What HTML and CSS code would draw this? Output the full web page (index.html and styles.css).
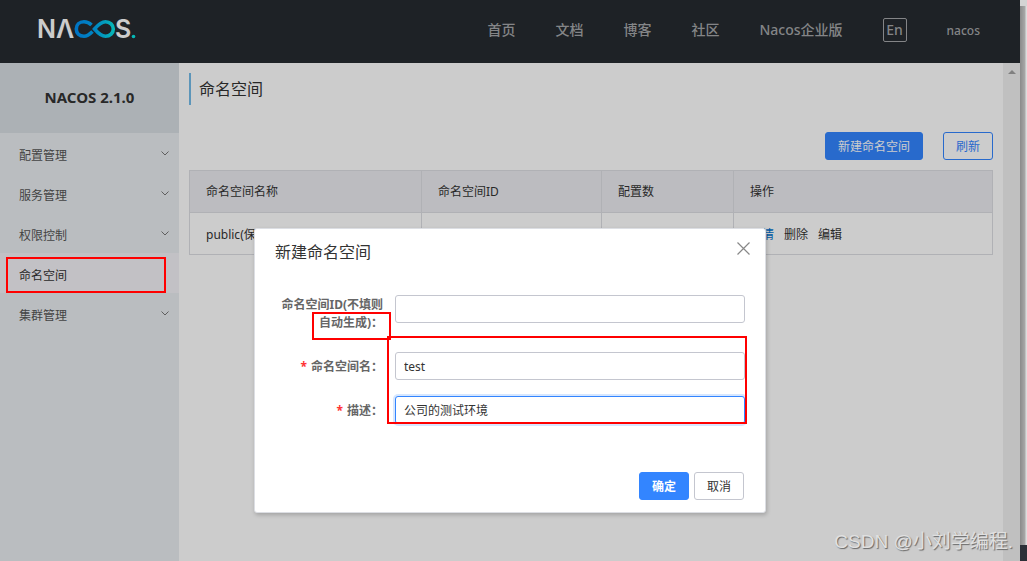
FILE: index.html
```html
<!DOCTYPE html>
<html lang="zh-CN">
<head>
<meta charset="utf-8">
<title>命名空间 - Nacos</title>
<link rel="stylesheet" href="styles.css">
</head>
<body>
<div class="page">
  <header class="header">
    <svg class="logo" width="104" height="40" viewBox="-2 -8 104 40" role="img" aria-label="NACOS">
      <defs>
        <linearGradient id="loop" gradientUnits="userSpaceOnUse" x1="37" y1="0" x2="77" y2="0">
          <stop offset="0" stop-color="#0090f4"/>
          <stop offset="0.5" stop-color="#00a8f4"/>
          <stop offset="1" stop-color="#08e8e4"/>
        </linearGradient>
      </defs>
      <text class="logo-text" x="-1" y="22">N</text>
      <text class="logo-text" x="18" y="22">Λ</text>
      <path fill="none" stroke="url(#loop)" stroke-width="3.6" d="M53.500 9C51 6.600 48.500 5.800 46 5.800C41.300 5.800 38.300 9 38.300 13C38.300 17 41.300 20.200 46 20.200C49.500 20.200 51.500 18.500 54.500 15.500M56.500 13C59.500 9.500 63 5.800 67.500 5.800C72 5.800 75.300 9 75.300 13C75.300 17 72 20.200 67.500 20.200C63 20.200 59.500 16.500 56.500 13Z"/>
      <text class="logo-text" x="77" y="22">S</text>
      <circle cx="95.500" cy="20.500" r="1.800" fill="#08e8e4"/>
    </svg>
    <nav class="nav">
      <a href="#">首页</a>
      <a href="#">文档</a>
      <a href="#">博客</a>
      <a href="#">社区</a>
      <a href="#">Nacos企业版</a>
      <button class="lang" type="button">En</button>
      <a class="user" href="#">nacos</a>
    </nav>
  </header>
  <div class="body">
    <aside class="sidebar">
      <h1 class="version">NACOS 2.1.0</h1>
      <ul class="menu">
        <li><a href="#">配置管理<svg class="chevron" viewBox="0 0 8 5"><path d="M0.500 0.500L4 4L7.500 0.500"/></svg></a></li>
        <li><a href="#">服务管理<svg class="chevron" viewBox="0 0 8 5"><path d="M0.500 0.500L4 4L7.500 0.500"/></svg></a></li>
        <li><a href="#">权限控制<svg class="chevron" viewBox="0 0 8 5"><path d="M0.500 0.500L4 4L7.500 0.500"/></svg></a></li>
        <li><a class="current" href="#">命名空间</a></li>
        <li><a href="#">集群管理<svg class="chevron" viewBox="0 0 8 5"><path d="M0.500 0.500L4 4L7.500 0.500"/></svg></a></li>
      </ul>
    </aside>
    <main class="main">
      <h2 class="title">命名空间</h2>
      <div class="toolbar">
        <button class="btn primary" type="button">新建命名空间</button>
        <button class="btn outline" type="button">刷新</button>
      </div>
      <table class="table">
        <colgroup><col class="c-name"><col class="c-id"><col class="c-count"><col></colgroup>
        <thead><tr><th>命名空间名称</th><th>命名空间ID</th><th>配置数</th><th>操作</th></tr></thead>
        <tbody><tr><td>public(保留空间)</td><td></td><td>0</td><td><div class="actions"><a class="link" href="#">详情</a><a href="#">删除</a><a href="#">编辑</a></div></td></tr></tbody>
      </table>
    </main>
    <div class="track"><span class="arrow"></span></div>
  </div>
  <div class="overlay">
    <form class="dialog" role="dialog" aria-labelledby="dialog-title">
      <div class="dialog-head">
        <h3 id="dialog-title">新建命名空间</h3>
        <button class="close" type="button" aria-label="关闭"><svg width="13" height="13" viewBox="0 0 13 13"><path d="M0.500 0.500L12.500 12.500M12.500 0.500L0.500 12.500"/></svg></button>
      </div>
      <div class="fields">
        <div class="field tall"><label for="ns-id">命名空间ID(不填则自动生成)：</label><input id="ns-id" type="text"></div>
        <div class="field"><label class="required" for="ns-name">命名空间名：</label><input id="ns-name" type="text" value="test"></div>
        <div class="field"><label class="required" for="ns-desc">描述：</label><input id="ns-desc" class="active" type="text" value="公司的测试环境"></div>
      </div>
      <div class="dialog-foot">
        <button class="btn primary" type="button">确定</button>
        <button class="btn" type="button">取消</button>
      </div>
    </form>
  </div>
  <span class="mark mark-menu"></span>
  <span class="mark mark-label"></span>
  <span class="mark mark-inputs"></span>
</div>
<div class="edge"></div>
<span class="watermark">CSDN @小刘学编程.</span>
</body>
</html>
```
FILE: styles.css
```css
* { box-sizing: border-box; }
body {
  margin: 0;
  min-height: 100vh;
  display: flex;
  position: relative;
  overflow: hidden;
  font: 12px/18px "Noto Sans", "Noto Sans CJK SC", sans-serif;
  color: #333;
  background: #fff;
}
a { color: inherit; text-decoration: none; }
button, input { font: inherit; color: inherit; }
h1, h2, h3, ul { margin: 0; padding: 0; font-weight: 400; }
ul { list-style: none; }

.page { position: relative; flex: 1; display: flex; flex-direction: column; }
.header {
  height: 63px;
  padding: 0 40px 0 36px;
  display: flex;
  justify-content: space-between;
  align-items: center;
  background: #262b30;
}
.logo { display: block; margin-bottom: 8px; }
.logo-text { font: 600 25px Inter, sans-serif; fill: #fff; }
.nav { display: flex; align-items: center; gap: 40px; padding-bottom: 4px; font-size: 14px; font-weight: 500; color: #a5a7a9; }
.lang { width: 24px; height: 24px; padding: 0; border: 1px solid #a5a7a9; border-radius: 2px; background: none; line-height: 20px; }
.user { padding-top: 2px; font-size: 12px; }

.body { flex: 1; display: flex; }
.sidebar { width: 179px; background: #e9edf0; color: #555; }
.version { height: 70px; padding-top: 25px; line-height: 18px; text-align: center; font-size: 15px; font-weight: 700; color: #333; background: #d8dee3; }
.menu a { display: flex; justify-content: space-between; align-items: center; height: 40px; padding: 5px 10px 0 19px; }
.menu .current { background: #f3f2f7; color: #333; }
.chevron { width: 8px; height: 5px; margin-bottom: 5px; fill: none; stroke: #777; }

.main { flex: 1; padding: 10px; }
.title { height: 32px; line-height: 32px; padding-left: 8px; border-left: 2px solid #73bbe8; font-size: 16px; }
.toolbar { display: flex; justify-content: flex-end; gap: 20px; padding: 27px 0 10px; }
.btn { height: 28px; padding: 1px 12px 0; border: 1px solid #c4c6cf; border-radius: 3px; background: #fff; }
.btn.primary { border-color: #3385ff; background: #3385ff; color: #fff; }
.btn.outline { border-color: #3385ff; color: #3385ff; }

.table { width: 100%; border-collapse: collapse; table-layout: fixed; }
.c-name { width: 232px; }
.c-id { width: 180px; }
.c-count { width: 132px; }
.table th, .table td { height: 42px; padding: 1px 16px 0; border: 1px solid #dcdee3; text-align: left; font-weight: 400; }
.table td { padding-top: 3px; }
.table th { background: #ebecf0; }
.actions { display: flex; gap: 10px; }
.link { color: #0070cc; }

.track { width: 17px; padding-top: 7px; background: #f1f1f1; }
.arrow { display: block; margin: 0 auto; width: 8px; border: 4px solid transparent; border-top: 0; border-bottom-color: #a0a0a0; }

.overlay {
  position: absolute;
  inset: 0;
  padding-top: 228px;
  display: flex;
  justify-content: center;
  align-items: flex-start;
  background: rgba(0, 0, 0, 0.2);
}
.dialog { width: 512px; padding: 11px 0 12px; border: 1px solid #dcdee3; border-radius: 3px; background: #fff; box-shadow: 1px 2px 4px rgba(0, 0, 0, 0.2); }
.dialog-head { display: flex; justify-content: space-between; align-items: flex-start; padding: 0 15px 0 20px; }
.dialog-head h3 { font-size: 16px; line-height: 24px; }
.close { padding: 2px 0; border: 0; background: none; line-height: 0; }
.close path { fill: none; stroke: #888; stroke-width: 1.2; }
.fields { display: flex; flex-direction: column; gap: 16px; padding: 31px 20px 48px; }
.field { display: flex; align-items: flex-start; gap: 12px; }
.field.tall { padding-bottom: 4px; }
.field label { width: 108px; padding: 6px 0 4px; text-align: right; font-weight: 700; color: #666; }
.field.tall label { padding: 1px 0 0; }
.required::before { content: "*"; margin-right: 4px; color: #f33; }
.field input { flex: 1; min-width: 0; height: 28px; padding: 0 8px; border: 1px solid #c4c6cf; border-radius: 3px; background: #fff; outline: 0; }
.field input.active { border-color: #3385ff; box-shadow: 0 0 0 2px rgba(51, 133, 255, 0.2); }
.dialog-foot { display: flex; justify-content: flex-end; gap: 5px; padding: 0 21px; }
.dialog-foot .primary { font-weight: 700; }

.mark { position: absolute; border: 2px solid #f00; }
.mark-menu { left: 6px; top: 257px; width: 160px; height: 36px; }
.mark-label { left: 312px; top: 312px; width: 79px; height: 28px; }
.mark-inputs { left: 387px; top: 336px; width: 360px; height: 88px; }

.edge { width: 7px; background: linear-gradient(#d4d4d4 6px, transparent 6px calc(100% - 16px), #2c3038 calc(100% - 16px)), linear-gradient(90deg, #8a8a8a, #a8a8a8 5px, #ddd 6px); }
.watermark {
  position: absolute;
  right: 14px;
  bottom: 6px;
  font: 19px/26px "Liberation Sans", "Noto Sans CJK SC", sans-serif;
  color: #e0e0e0;
  text-shadow: 1px 1px 1px #666;
}
```
